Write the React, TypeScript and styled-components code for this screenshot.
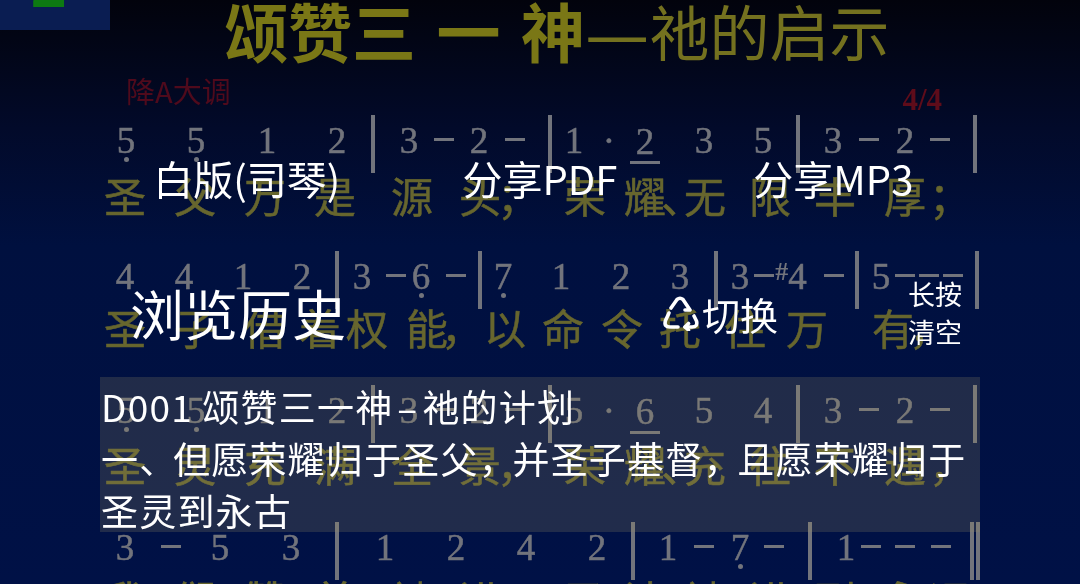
import React from 'react';
import styled, { createGlobalStyle } from 'styled-components';

const Global = createGlobalStyle`
  html, body { margin: 0; padding: 0; background: #000; }
  body { width: 1080px; height: 584px; overflow: hidden; }
`;

// token: center x on the slide, and what is drawn there
type Tok = [number, string];

const row1: Tok[] = [[126, '5.'], [196, '5.'], [267, '1'], [337, '2'], [373, '|'], [409, '3'], [444, '-'], [479, '2'], [515, '-'], [550, '|'], [574, '1'], [609, '·'], [645, '2_'], [704, '3'], [763, '5'], [798, '|'], [833, '3'], [869, '-'], [905, '2'], [940, '-'], [975, '|']];
const row2: Tok[] = [[125, '4'], [184, '4'], [243, '1'], [302, '2'], [337, '|'], [362, '3'], [396, '-'], [421, '6.'], [456, '-'], [480, '|'], [503, '7.'], [561, '1'], [621, '2'], [680, '3'], [716, '|'], [740, '3'], [764, '-'], [791, '#4'], [834, '-'], [857, '|'], [881, '5'], [905, '-'], [929, '-'], [953, '-'], [977, '|']];
const row3: Tok[] = [[126, '5.'], [196, '5.'], [267, '1'], [337, '2'], [373, '|'], [409, '3'], [444, '-'], [479, '2'], [515, '-'], [550, '|'], [574, '5'], [609, '·'], [645, '6_'], [704, '5'], [763, '4'], [798, '|'], [833, '3'], [869, '-'], [905, '2'], [940, '-'], [975, '|']];
const row4: Tok[] = [[125, '3'], [171, '-'], [220, '5'], [291, '3'], [337, '|'], [385, '1'], [456, '2'], [526, '4'], [597, '2'], [633, '|'], [668, '1'], [704, '-'], [740, '7.'], [774, '-'], [810, '|'], [846, '1'], [871, '-'], [905, '-'], [941, '-'], [975, '||']];

const lyr1: Tok[] = [[125, '圣'], [195, '父'], [265, '万'], [335, '是'], [412, '源'], [480, '头'], [518, '；'], [585, '荣'], [645, '耀'], [682, '、'], [705, '无'], [770, '限'], [835, '丰'], [905, '厚'], [950, '；']];
const lyr2: Tok[] = [[125, '圣'], [195, '子'], [265, '借'], [320, '着'], [367, '权'], [427, '能'], [462, '，'], [505, '以'], [563, '命'], [622, '令'], [680, '托'], [745, '住'], [807, '万'], [893, '有'], [930, '，']];
const lyr3: Tok[] = [[125, '圣'], [195, '灵'], [265, '充'], [335, '满'], [412, '全'], [480, '景'], [518, '，'], [585, '荣'], [645, '耀'], [682, '、'], [705, '充'], [770, '往'], [835, '不'], [905, '遇'], [950, '，']];
const lyr4: Tok[] = [[125, '我'], [195, '们'], [265, '赞'], [335, '美'], [412, '祂'], [480, '进'], [585, '圣'], [645, '洁'], [705, '祂'], [770, '进'], [835, '到'], [905, '永'], [950, '远']];

const Stage = styled.div`
  position: relative;
  width: 1080px;
  height: 584px;
  overflow: hidden;
  background: linear-gradient(180deg, #02030c 0%, #020a2a 22%, #00103f 42%, #001146 100%);
  font-family: "Noto Sans CJK SC", "Noto Sans", sans-serif;
`;

const Slide = styled.div`
  display: flex;
  flex-direction: column;
  height: 584px;
  filter: blur(0.6px);
`;

const Header = styled.header`
  display: flex;
  height: 72px;
  flex: none;
`;

const Thumb = styled.div`
  flex: none;
  width: 110px;
  height: 30px;
  background: #0a1d52;
  color: #0d7a12;
  font: 700 64px/1 "Liberation Sans", sans-serif;
  text-indent: 31px;
  overflow: hidden;
  & > span { display: block; margin-top: -47px; }
`;

const Title = styled.h1`
  margin: -7px 0 0 114px;
  display: flex;
  align-items: center;
  height: 72px;
  font-size: 60px;
  font-weight: 400;
  color: #74711f;
  white-space: pre;
`;

const TitleBold = styled.span`
  font-size: 64px;
  font-weight: 700;
  color: #7a7716;
  word-spacing: 6px;
`;

const TitleDash = styled.span`
  font-size: 72px;
  line-height: 72px;
`;

const Meta = styled.div`
  display: flex;
  justify-content: space-between;
  height: 36px;
  padding: 0 138px 0 126px;
  color: #4f0a1c;
  font-size: 29px;
  line-height: 36px;
`;

const Metre = styled.span`
  font: 700 31px/36px "Liberation Serif", serif;
  margin-top: 10px;
  color: #5e0c1a;
`;

const Line = styled.div<{ $h: number; $top?: number }>`
  display: flex;
  align-items: center;
  flex: none;
  height: ${p => p.$h}px;
  margin-top: ${p => p.$top ?? 0}px;
`;

const Anchor = styled.div<{ $gap: number }>`
  flex: none;
  width: 0;
  margin-left: ${p => p.$gap}px;
  display: flex;
  justify-content: center;
  position: relative;
  white-space: nowrap;
`;

const Digit = styled.span<{ $under?: boolean }>`
  position: relative;
  top: -3px;
  font: 400 37px/40px "Liberation Serif", serif;
  color: #72747c;
  -webkit-text-stroke: 0.5px #72747c;
  ${p => p.$under && `border-bottom: 3px solid #72747c; padding: 0 6px; line-height: 38px; margin-top: 4px;`}
`;

const LowDot = styled.i`
  position: absolute;
  left: 50%;
  top: 36px;
  width: 5px;
  height: 5px;
  margin-left: -2.5px;
  border-radius: 50%;
  background: #72747c;
`;

const Dash = styled.span`
  width: 20px;
  height: 3px;
  margin-top: -6px;
  background: #72747c;
  flex: none;
`;

const Sharp = styled.span`
  font: 700 26px/40px "Liberation Serif", serif;
  color: #72747c;
  margin-top: -8px;
`;

const Bar = styled.span`
  flex: none;
  width: 4px;
  height: 58px;
  background: #72747c;
`;

const DoubleBar = styled.span`
  flex: none;
  width: 10px;
  height: 58px;
  border-left: 4px solid #72747c;
  border-right: 4px solid #72747c;
  box-sizing: border-box;
`;

const Lyric = styled.span`
  font-size: 42px;
  line-height: 50px;
  color: #67662e;
  -webkit-text-stroke: 0.5px #67662e;
`;

const Notes = ({ toks, top = 0 }: { toks: Tok[]; top?: number }) => (
  <Line $h={56} $top={top}>
    {toks.map(([x, t], i) => {
      const gap = x - (i ? toks[i - 1][0] : 0);
      let body: React.ReactNode;
      if (t === '|') body = <Bar />;
      else if (t === '||') body = <DoubleBar />;
      else if (t === '-') body = <Dash />;
      else if (t[0] === '#') body = <><Sharp>#</Sharp><Digit>{t[1]}</Digit></>;
      else if (t[1] === '.') body = <Digit>{t[0]}<LowDot /></Digit>;
      else if (t[1] === '_') body = <Digit $under>{t[0]}</Digit>;
      else body = <Digit>{t}</Digit>;
      return <Anchor key={i} $gap={gap}>{body}</Anchor>;
    })}
  </Line>
);

const Lyrics = ({ toks, h }: { toks: Tok[]; h: number }) => (
  <Line $h={h}>
    {toks.map(([x, t], i) => (
      <Anchor key={i} $gap={x - (i ? toks[i - 1][0] : 0)}><Lyric>{t}</Lyric></Anchor>
    ))}
  </Line>
);

const Overlay = styled.div`
  position: absolute;
  left: 100px;
  top: 152px;
  width: 880px;
  display: flex;
  flex-direction: column;
  color: #fff;
  filter: blur(0.3px);
`;

const ActionRow = styled.div`
  display: grid;
  grid-template-columns: repeat(3, 1fr);
  height: 52px;
  margin-bottom: 71px;
`;

const Action = styled.div`
  text-align: center;
  font-size: 40px;
  line-height: 52px;
  font-weight: 400;
  white-space: nowrap;
`;

const HistoryBar = styled.div`
  display: flex;
  align-items: center;
  height: 76px;
  margin-bottom: 26px;
`;

const HistoryTitle = styled.div`
  font-size: 54px;
  line-height: 76px;
  font-weight: 400;
  margin-left: 30px;
  width: 532px;
  white-space: nowrap;
`;

const Toggle = styled.div`
  display: flex;
  align-items: center;
  width: 246px;
  font-size: 38px;
  font-weight: 400;
  gap: 3px;
  & > svg { flex: none; }
`;

const Clear = styled.div`
  font-size: 27px;
  line-height: 38px;
  font-weight: 400;
  text-align: center;
`;

const Panel = styled.div`
  height: 155px;
  box-sizing: border-box;
  padding: 3px 0 0 1px;
  background: rgba(150, 140, 100, 0.22);
  font-size: 37px;
  line-height: 52px;
  font-weight: 400;
  letter-spacing: 1.2px;
  white-space: nowrap;
  overflow: hidden;
`;

const Punct = styled.span`
  letter-spacing: -3.2px;
`;

const Hyphen = styled.span`
  padding: 0 4px;
`;

const CycleIcon = () => (
  <svg width="37" height="36" viewBox="0 0 37 36" fill="none" stroke="#fff" strokeWidth="3.6" strokeLinecap="round" strokeLinejoin="round">
    <path d="M9 13 L15 4.5 Q18 2 21 4.5 L28 15 L23 15" />
    <path d="M7 18 L3.5 25.5 Q1.5 32 8 32 H16" />
    <path d="M23 32 H30 Q36 32 34.5 26 L32 21" />
    <path d="M26.5 28.5 L23 32 L26.5 35" />
  </svg>
);

export default function App() {
  return (
    <Stage>
      <Global />
      <Slide>
        <Header>
          <Thumb><span>2</span></Thumb>
          <Title><TitleBold>颂赞三 一 神</TitleBold><TitleDash>—</TitleDash>祂的启示</Title>
        </Header>
        <Meta><span>降A大调</span><Metre>4/4</Metre></Meta>
        <Notes toks={row1} top={8} />
        <Lyrics toks={lyr1} h={46} />
        <Notes toks={row2} top={34} />
        <Lyrics toks={lyr2} h={38} />
        <Notes toks={row3} top={40} />
        <Lyrics toks={lyr3} h={44} />
        <Notes toks={row4} top={37} />
        <Lyrics toks={lyr4} h={40} />
      </Slide>
      <Overlay>
        <ActionRow>
          <Action>白版(司琴)</Action>
          <Action>分享PDF</Action>
          <Action>分享MP3</Action>
        </ActionRow>
        <HistoryBar>
          <HistoryTitle>浏览历史</HistoryTitle>
          <Toggle><CycleIcon />切换</Toggle>
          <Clear>长按<br />清空</Clear>
        </HistoryBar>
        <Panel>
          D001 颂赞三一神<Hyphen>–</Hyphen>祂的计划<br />
          一<Punct>、</Punct>但愿荣耀归于圣父<Punct>，</Punct>并圣子基督<Punct>，</Punct>且愿荣耀归于<br />
          圣灵到永古
        </Panel>
      </Overlay>
    </Stage>
  );
}
